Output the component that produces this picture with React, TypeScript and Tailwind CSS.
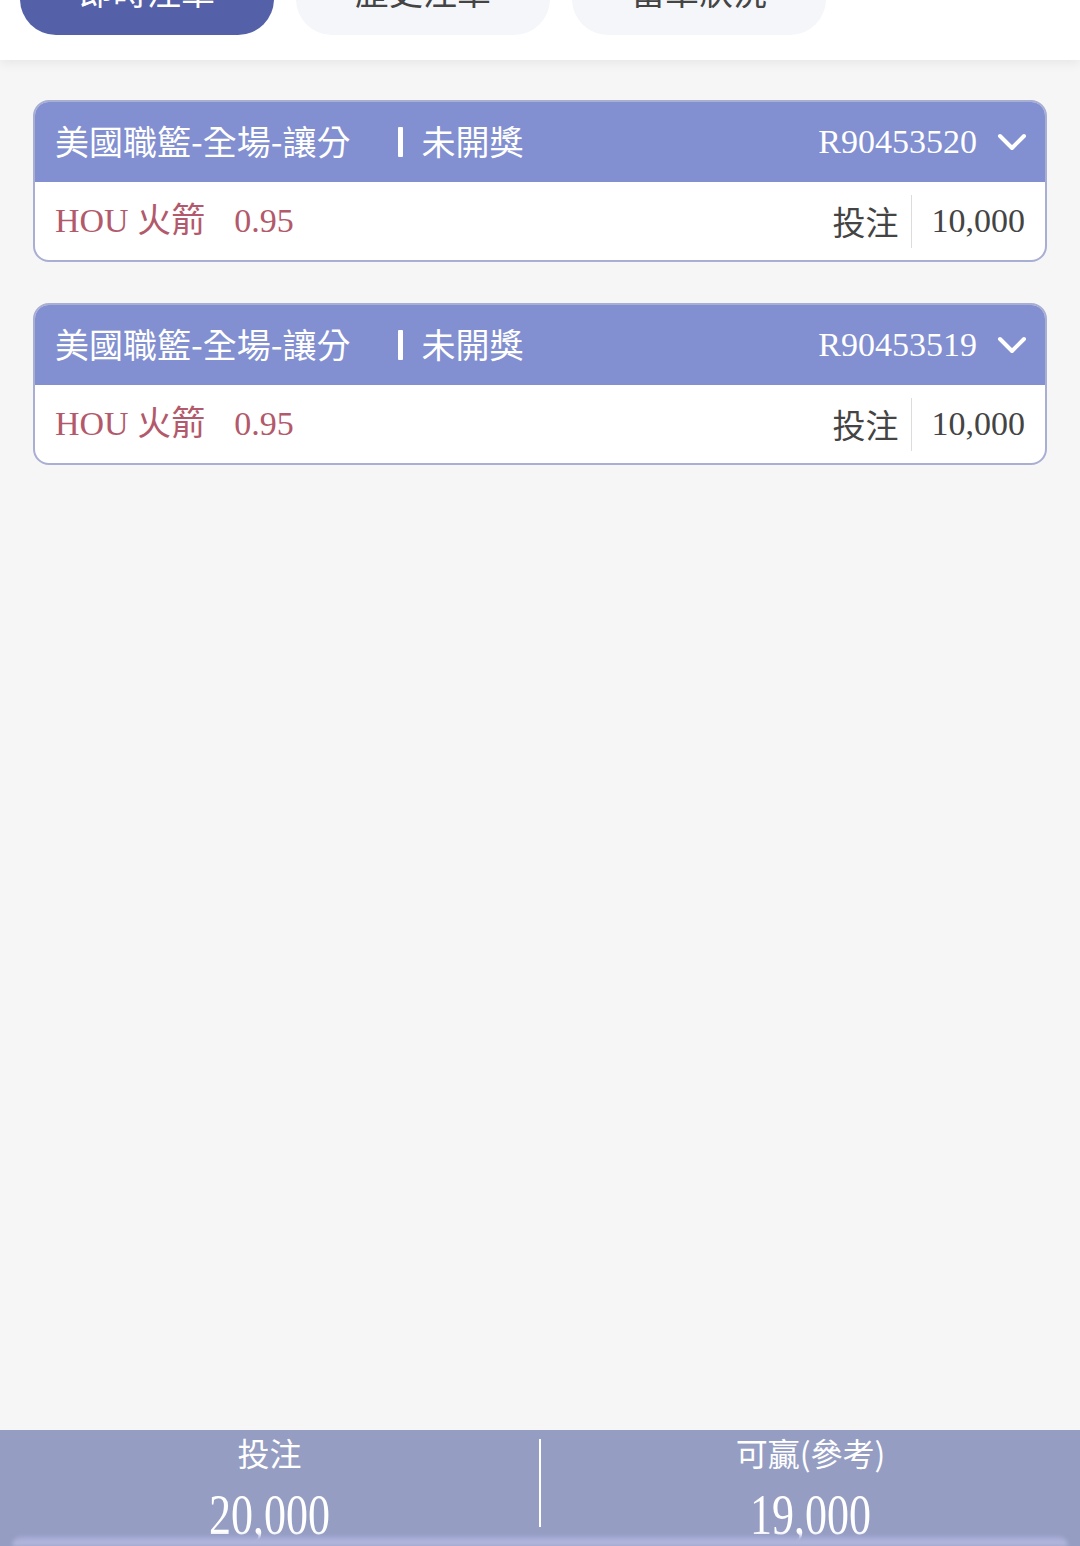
import React from "react";

type Bet = {
  id: string;
  league: string;
  status: string;
  team: string;
  odds: string;
  amount: string;
};

const bets: Bet[] = [
  { id: "R90453520", league: "美國職籃-全場-讓分", status: "未開獎", team: "HOU 火箭", odds: "0.95", amount: "10,000" },
  { id: "R90453519", league: "美國職籃-全場-讓分", status: "未開獎", team: "HOU 火箭", odds: "0.95", amount: "10,000" },
];

const tabs = ["即時注單", "歷史注單", "當單狀況"];

const serif = "font-['Liberation_Serif','Noto_Sans_CJK_TC',serif]";
const sans = "font-['Noto_Sans_CJK_TC','Noto_Sans',sans-serif]";

function BetCard({ bet }: { bet: Bet }) {
  return (
    <div className="rounded-[16px] border-2 border-[#a9aed3] bg-white overflow-hidden">
      {/* header */}
      <div className="h-[80px] flex items-center bg-[#828fd0] pl-[20px] pr-[18px] text-white">
        <span className={`${sans} text-[34px] leading-none -mt-[2px]`}>{bet.league}</span>
        <span className="ml-[47px] w-[5px] h-[30px] bg-white rounded-[1px]" />
        <span className={`${sans} ml-[19px] text-[34px] leading-none -mt-[2px]`}>{bet.status}</span>
        <span className={`${serif} ml-auto text-[34px] leading-none`}>{bet.id}</span>
        <svg className="ml-[20px]" width="30" height="18" viewBox="0 0 30 18" fill="none">
          <polyline points="3,3 15,15 27,3" stroke="white" strokeWidth="4" strokeLinecap="round" strokeLinejoin="round" />
        </svg>
      </div>
      {/* body */}
      <div className="h-[78px] flex items-center px-[20px]">
        <span className={`${serif} text-[34px] leading-none text-[#b2596b]`}>{bet.team}</span>
        <span className={`${serif} ml-[29px] text-[34px] leading-none text-[#b2596b]`}>{bet.odds}</span>
        <span className={`${sans} ml-auto text-[33px] leading-none text-[#444]`}>投注</span>
        <span className="ml-[12px] w-px h-[53px] bg-[#dcdcdc]" />
        <span className={`${serif} ml-[20px] text-[34px] leading-none text-[#444]`}>{bet.amount}</span>
      </div>
    </div>
  );
}

export default function App() {
  return (
    <div className="h-screen flex flex-col bg-[#f6f6f6] overflow-hidden">
      {/* top tabs, partially scrolled out of view */}
      <div className="-mt-[55px] bg-white pb-[25px] pl-[20px] flex gap-[22px] shadow-[0_4px_10px_rgba(0,0,0,0.06)] relative z-10">
        {tabs.map((t, i) => (
          <div
            key={t}
            className={`w-[254px] h-[90px] rounded-[36px] flex items-center justify-center ${sans} text-[34px] ${
              i === 0 ? "bg-[#5460a8] text-white" : "bg-[#f5f6fa] text-[#444]"
            }`}
          >
            {t}
          </div>
        ))}
      </div>

      {/* bet list */}
      <div className="flex-1 px-[33px] pt-[40px] flex flex-col gap-[41px]">
        {bets.map((b) => (
          <BetCard key={b.id} bet={b} />
        ))}
      </div>

      {/* summary bar */}
      <div className="bg-[#959dc2] text-white">
        <div className="h-[106px] flex items-center">
          <div className="flex-1 flex flex-col items-center">
            <span className={`${sans} text-[32px] leading-none mt-[8px]`}>投注</span>
            <span className={`${serif} text-[44px] leading-none mt-[26px] scale-y-[1.3]`}>20,000</span>
          </div>
          <span className="w-[2px] h-[88px] bg-white" />
          <div className="flex-1 flex flex-col items-center">
            <span className={`${sans} text-[32px] leading-none mt-[8px]`}>可贏(參考)</span>
            <span className={`${serif} text-[44px] leading-none mt-[26px] scale-y-[1.3]`}>19,000</span>
          </div>
        </div>
        <div className="h-[10px] mx-[12px] rounded-t-[30px] bg-gradient-to-b from-[#a0a6d2] to-[#b9bee0] blur-[2px]" />
      </div>
    </div>
  );
}
